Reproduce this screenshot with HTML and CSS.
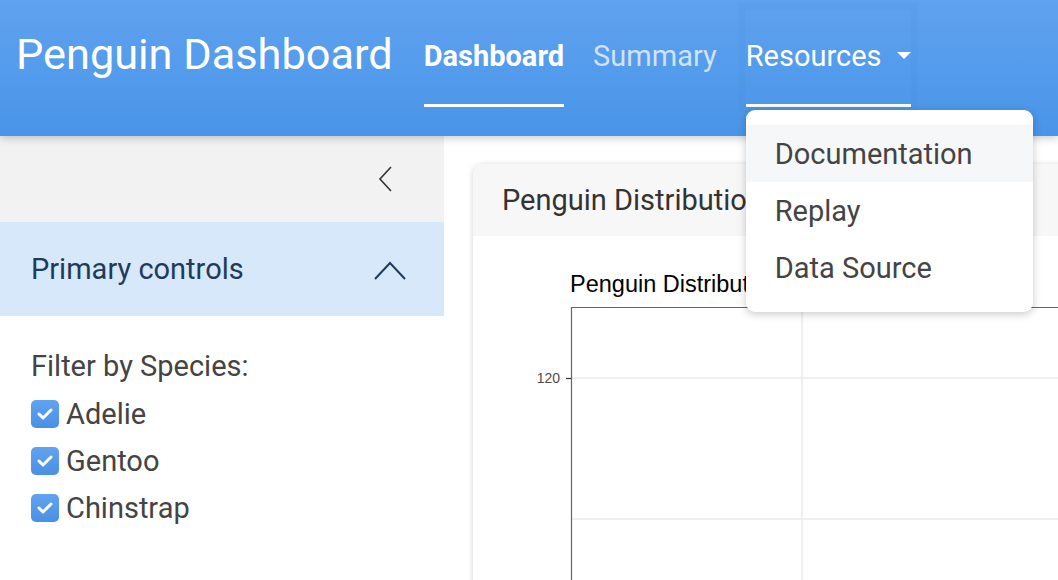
FILE: index.html
```html
<!DOCTYPE html>
<html lang="en">
<head>
<meta charset="utf-8">
<title>Penguin Dashboard</title>
<link rel="stylesheet" href="styles.css">
</head>
<body>
<header class="navbar">
  <div class="brand">Penguin Dashboard</div>
  <nav class="nav">
    <a class="nav-link active bold" href="#">Dashboard</a>
    <a class="nav-link muted" href="#">Summary</a>
    <div class="nav-dropdown">
      <a class="nav-link active focus" href="#">Resources <span class="caret"></span></a>
      <div class="dropdown-menu">
        <a class="dropdown-item hover" href="#">Documentation</a>
        <a class="dropdown-item" href="#">Replay</a>
        <a class="dropdown-item" href="#">Data Source</a>
      </div>
    </div>
  </nav>
</header>
<div class="layout">
  <aside class="sidebar">
    <div class="sidebar-top">
      <svg class="collapse-icon" width="16" height="26" viewBox="0 0 16 26"><polyline points="13,1 2,13 13,25" fill="none" stroke="#333" stroke-width="1.6"/></svg>
    </div>
    <div class="acc-header">
      <span class="acc-title">Primary controls</span>
      <svg class="acc-icon" width="32" height="20" viewBox="0 0 32 20"><polyline points="1,19 16,3 31,19" fill="none" stroke="#1d3a5c" stroke-width="2"/></svg>
    </div>
    <div class="acc-body">
      <div class="filter-label">Filter by Species:</div>
      <label class="check"><span class="box"><svg width="16" height="12" viewBox="0 0 16 12"><polyline points="2,6 6,10 14,2" fill="none" stroke="#fff" stroke-width="3" stroke-linecap="round" stroke-linejoin="round"/></svg></span>Adelie</label>
      <label class="check"><span class="box"><svg width="16" height="12" viewBox="0 0 16 12"><polyline points="2,6 6,10 14,2" fill="none" stroke="#fff" stroke-width="3" stroke-linecap="round" stroke-linejoin="round"/></svg></span>Gentoo</label>
      <label class="check"><span class="box"><svg width="16" height="12" viewBox="0 0 16 12"><polyline points="2,6 6,10 14,2" fill="none" stroke="#fff" stroke-width="3" stroke-linecap="round" stroke-linejoin="round"/></svg></span>Chinstrap</label>
    </div>
  </aside>
  <main class="content">
    <section class="card">
      <div class="card-header">Penguin Distribution</div>
      <div class="card-body">
        <svg class="chart" width="700" height="420" viewBox="0 0 700 420">
          <text x="97" y="56" class="chart-title">Penguin Distribution</text>
          <rect x="98" y="71" width="640" height="400" fill="#fff"/>
          <line x1="98" y1="142" x2="700" y2="142" stroke="#ebebeb" stroke-width="1.5"/>
          <line x1="98" y1="283" x2="700" y2="283" stroke="#ebebeb" stroke-width="1.5"/>
          <line x1="329" y1="71" x2="329" y2="420" stroke="#ebebeb" stroke-width="1.5"/>
          <line x1="98.5" y1="71" x2="98.5" y2="420" stroke="#666" stroke-width="1.2"/>
          <line x1="98" y1="71.5" x2="700" y2="71.5" stroke="#666" stroke-width="1.2"/>
          <line x1="93" y1="142.5" x2="98" y2="142.5" stroke="#333" stroke-width="1.2"/>
          <text x="87" y="147" class="tick" text-anchor="end">120</text>
        </svg>
      </div>
    </section>
  </main>
</div>
</body>
</html>
```
FILE: styles.css
```css
* { box-sizing: border-box; }
html, body { margin: 0; padding: 0; }
body {
  width: 1058px;
  height: 580px;
  overflow: hidden;
  font-family: Roboto, "Liberation Sans", sans-serif;
  background: #fff;
  color: #444;
}
a { text-decoration: none; color: inherit; }

.navbar {
  position: relative;
  z-index: 5;
  height: 136px;
  display: flex;
  align-items: stretch;
  padding: 0 0 0 16px;
  background: linear-gradient(to bottom, #5fa2ef, #4995e8);
  box-shadow: 0 2px 8px rgba(0,0,0,0.22);
}
.brand {
  color: #fff;
  font-size: 43.3px;
  line-height: 1;
  display: flex;
  align-items: center;
  padding-bottom: 26px;
  margin-right: 31px;
}
.nav {
  display: flex;
  align-items: stretch;
  gap: 29px;
}
.nav-link {
  display: flex;
  align-items: center;
  font-size: 29px;
  color: #fff;
  padding-top: 14px;
  padding-bottom: 12px;
  margin-bottom: 29px;
  border-bottom: 3px solid transparent;
  margin-top: 6px;
}
.nav-link.active { border-bottom-color: #fff; }
.nav-link.bold { font-weight: 700; }
.nav-link.muted { color: rgba(255,255,255,0.72); }
.nav-dropdown {
  position: relative;
  display: flex;
}
.nav-link.focus { position: relative; }
.nav-link.focus::before {
  content: "";
  position: absolute;
  left: -8px; right: -7px; top: -3px; bottom: -8px;
  border: 7px solid rgba(30,80,160,0.035);
}
.caret {
  display: inline-block;
  width: 0; height: 0;
  margin-left: 15px;
  border-left: 7px solid transparent;
  border-right: 7px solid transparent;
  border-top: 7px solid #fff;
  position: relative;
  top: -1px;
}
.dropdown-menu {
  position: absolute;
  left: 0;
  top: 110px;
  width: 287px;
  background: #fff;
  border-radius: 9px;
  padding: 15px 0 16px;
  box-shadow: 0 2px 8px rgba(0,0,0,0.22);
  z-index: 10;
}
.dropdown-item {
  display: flex;
  align-items: center;
  height: 57px;
  padding-left: 29px;
  font-size: 29px;
  color: #444;
}
.dropdown-item.hover { background: #f6f7f9; }

.layout {
  display: flex;
  height: 444px;
}
.sidebar {
  width: 444px;
  flex: none;
  background: #fff;
}
.sidebar-top {
  height: 86px;
  background: #f2f2f2;
  display: flex;
  justify-content: flex-end;
  align-items: center;
  padding-right: 50px;
}
.acc-header {
  height: 94px;
  background: #d6e8f9;
  display: flex;
  align-items: center;
  justify-content: space-between;
  padding: 0 38px 0 31px;
}
.acc-title {
  font-size: 29px;
  color: #1f3b5c;
}
.acc-icon { margin-top: 2px; }
.acc-body {
  padding: 33px 31px 0;
}
.filter-label {
  font-size: 29px;
  color: #444;
  margin-bottom: 7px;
}
.check {
  display: flex;
  align-items: center;
  height: 47px;
  font-size: 29px;
  color: #444;
}
.box {
  width: 28px;
  height: 28px;
  border-radius: 5px;
  background: linear-gradient(to bottom, #62a3ef, #4890e6);
  display: flex;
  align-items: center;
  justify-content: center;
  margin-right: 7px;
}

.content {
  flex: 1;
  padding: 28px 0 0 29px;
  overflow: hidden;
}
.card {
  width: 700px;
  background: #fff;
  border-radius: 10px 0 0 0;
  box-shadow: 0 1px 6px rgba(0,0,0,0.18);
  overflow: hidden;
  height: 480px;
}
.card-header {
  height: 72px;
  background: #f7f7f7;
  display: flex;
  align-items: center;
  padding-left: 29px;
  font-size: 29px;
  color: #333;
}
.card-body { background: #fff; }
.chart { display: block; }
.chart-title {
  font-family: "Liberation Sans", Arial, sans-serif;
  font-size: 23.5px;
  fill: #000;
}
.tick {
  font-family: "Liberation Sans", Arial, sans-serif;
  font-size: 14px;
  fill: #4d4d4d;
}
```
